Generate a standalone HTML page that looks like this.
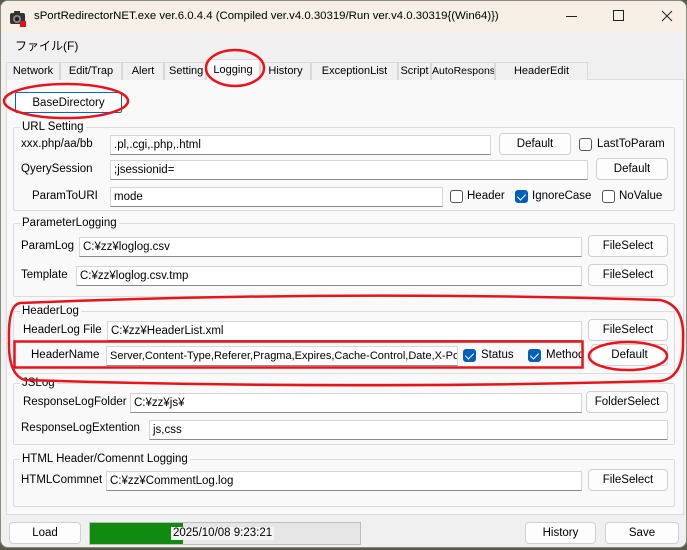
<!DOCTYPE html>
<html><head><meta charset="utf-8">
<style>
*{box-sizing:border-box;margin:0;padding:0}
body{width:687px;height:550px;overflow:hidden;background:#5a5a4a;font-family:"Liberation Sans","Noto Sans CJK JP",sans-serif;font-size:11.5px;color:#000;position:relative}
.win{position:absolute;left:0;top:0;width:687px;height:548px;background:#f0f0f0;border-radius:8px;overflow:hidden;border:1px solid #8a8a80}
.title{position:absolute;left:0;top:0;width:687px;height:32px;background:#f5efe6}
.a{position:absolute;white-space:nowrap}
.tb{position:absolute;background:#fff;border:1px solid #d6d6d6;border-bottom:1px solid #8a8a8a;height:20px;padding:2px 3px;line-height:15px;overflow:hidden;white-space:nowrap}
.btn{position:absolute;background:#fdfdfd;border:1px solid #d0d0d0;border-radius:4px;height:22px;text-align:center;line-height:20px}
.grp{position:absolute;border:1px solid #dcdcdc;border-radius:2px}
.gl{position:absolute;top:-8px;left:6px;background:#f9f9f9;padding:0 2px;line-height:14px}
.cb{position:absolute;width:13px;height:13px;border:1px solid #555;border-radius:3px;background:#fff}
.cb.on{background:#005fb8;border-color:#005fb8}
.cb.on::after{content:"";position:absolute;left:3px;top:1px;width:4px;height:7px;border:solid #fff;border-width:0 1.5px 1.5px 0;transform:rotate(45deg)}
.tab{position:absolute;top:61px;height:18px;border:1px solid #d8d8d8;border-bottom:none;background:#f0f0f0;line-height:16px;text-align:center;font-size:11px;overflow:hidden}
</style></head><body>
<div class="win">
<div class="title"></div>
<svg class="a" style="left:8px;top:8px" width="18" height="18" viewBox="0 0 18 18"><rect x="1" y="4" width="15" height="11" rx="2" fill="#333"/><rect x="5" y="2" width="6" height="3" fill="#333"/><circle cx="8" cy="10" r="4" fill="#888"/><circle cx="8" cy="10" r="2.2" fill="#222"/><rect x="11" y="12" width="6" height="6" fill="#e01020"/></svg>
<div class="a" style="left:33px;top:9px;font-size:11.4px">sPortRedirectorNET.exe ver.6.0.4.4 (Compiled ver.v4.0.30319/Run ver.v4.0.30319{(Win64)})</div>
<div class="a" style="left:565px;top:15px;width:11px;height:1px;background:#222"></div>
<div class="a" style="left:612px;top:9px;width:11px;height:11px;border:1px solid #222"></div>
<svg class="a" style="left:660px;top:9px" width="12" height="12"><path d="M1 1L11 11M11 1L1 11" stroke="#222" stroke-width="1"/></svg>
<div class="a" style="left:14px;top:36px;font-size:12px">ファイル(F)</div>
<div class="a" style="left:5px;top:78px;width:678px;height:436px;background:#f9f9f9;border:1px solid #dcdcdc"></div>
<div class="tab" style="left:5px;width:54px">Network</div>
<div class="tab" style="left:59px;width:62px">Edit/Trap</div>
<div class="tab" style="left:121px;width:42px">Alert</div>
<div class="tab" style="left:163px;width:42px;text-align:left;padding-left:4px">Setting</div>
<div class="tab" style="left:205px;top:58px;height:21px;width:54px;background:#f9f9f9;line-height:20px">Logging</div>
<div class="tab" style="left:259px;width:51px">History</div>
<div class="tab" style="left:310px;width:87px">ExceptionList</div>
<div class="tab" style="left:397px;width:33px">Script</div>
<div class="tab" style="left:430px;width:64px;font-size:10.5px">AutoResponse</div>
<div class="tab" style="left:494px;width:93px">HeaderEdit</div>
<div class="btn" style="left:14px;top:91px;width:107px;height:21px;border:1px solid #0067c0;border-radius:2px;background:#fff">BaseDirectory</div>

<div class="grp" style="left:12px;top:126px;width:662px;height:84px"><div class="gl">URL Setting</div></div>
<div class="a" style="left:20px;top:137px">xxx.php/aa/bb</div>
<div class="tb" style="left:109px;top:134px;width:381px">.pl,.cgi,.php,.html</div>
<div class="btn" style="left:498px;top:132px;width:72px">Default</div>
<div class="cb" style="left:578px;top:137px"></div><div class="a" style="left:596px;top:137px">LastToParam</div>
<div class="a" style="left:20px;top:162px">QyerySession</div>
<div class="tb" style="left:109px;top:159px;width:478px">;jsessionid=</div>
<div class="btn" style="left:595px;top:157px;width:72px">Default</div>
<div class="a" style="left:31px;top:189px">ParamToURI</div>
<div class="tb" style="left:109px;top:186px;width:333px">mode</div>
<div class="cb" style="left:449px;top:189px"></div><div class="a" style="left:466px;top:189px">Header</div>
<div class="cb on" style="left:514px;top:189px"></div><div class="a" style="left:531px;top:189px">IgnoreCase</div>
<div class="cb" style="left:601px;top:189px"></div><div class="a" style="left:618px;top:189px">NoValue</div>

<div class="grp" style="left:12px;top:222px;width:662px;height:74px"><div class="gl">ParameterLogging</div></div>
<div class="a" style="left:20px;top:239px">ParamLog</div>
<div class="tb" style="left:78px;top:236px;width:503px">C:¥zz¥loglog.csv</div>
<div class="btn" style="left:587px;top:234px;width:80px">FileSelect</div>
<div class="a" style="left:20px;top:268px">Template</div>
<div class="tb" style="left:75px;top:265px;width:506px">C:¥zz¥loglog.csv.tmp</div>
<div class="btn" style="left:587px;top:263px;width:80px">FileSelect</div>

<div class="grp" style="left:12px;top:310px;width:662px;height:63px"><div class="gl">HeaderLog</div></div>
<div class="a" style="left:22px;top:323px">HeaderLog File</div>
<div class="tb" style="left:106px;top:320px;width:475px">C:¥zz¥HeaderList.xml</div>
<div class="btn" style="left:587px;top:318px;width:80px">FileSelect</div>
<div class="a" style="left:30px;top:348px">HeaderName</div>
<div class="tb" style="left:105px;top:345px;width:352px;font-size:11px">Server,Content-Type,Referer,Pragma,Expires,Cache-Control,Date,X-Powered</div>
<div class="cb on" style="left:462px;top:348px"></div><div class="a" style="left:480px;top:348px">Status</div>
<div class="cb on" style="left:527px;top:348px"></div><div class="a" style="left:545px;top:348px">Method</div>
<div class="btn" style="left:590px;top:343px;width:77px">Default</div>

<div class="grp" style="left:12px;top:382px;width:662px;height:62px"><div class="gl">JSLog</div></div>
<div class="a" style="left:22px;top:395px">ResponseLogFolder</div>
<div class="tb" style="left:129px;top:392px;width:452px">C:¥zz¥js¥</div>
<div class="btn" style="left:585px;top:390px;width:82px">FolderSelect</div>
<div class="a" style="left:20px;top:421px">ResponseLogExtention</div>
<div class="tb" style="left:148px;top:419px;width:519px">js,css</div>

<div class="grp" style="left:12px;top:458px;width:662px;height:48px"><div class="gl">HTML Header/Comennt Logging</div></div>
<div class="a" style="left:20px;top:473px">HTMLCommnet</div>
<div class="tb" style="left:105px;top:470px;width:476px">C:¥zz¥CommentLog.log</div>
<div class="btn" style="left:587px;top:468px;width:80px">FileSelect</div>

<div class="btn" style="left:8px;top:521px;width:72px">Load</div>
<div class="a" style="left:88px;top:521px;width:272px;height:23px;background:#e6e6e6;border:1px solid #bcbcbc"></div>
<div class="a" style="left:89px;top:522px;width:93px;height:21px;background:#118a11"></div>
<div class="a" style="left:170px;top:526px;background:#f4f4f4;padding:0 2px;line-height:13px">2025/10/08 9:23:21</div>
<div class="btn" style="left:524px;top:521px;width:71px">History</div>
<div class="btn" style="left:604px;top:521px;width:74px">Save</div>
</div>
<svg class="a" style="left:0;top:0" width="687" height="550">
<g fill="none" stroke="#e8141c" stroke-width="2.5">
<ellipse cx="235" cy="68" rx="29" ry="18"/>
<ellipse cx="66" cy="101" rx="62" ry="17"/>
<path d="M20 303 Q340 290 660 300 Q685 305 683 340 Q684 378 660 381 Q340 390 25 380 Q8 375 9 340 Q8 305 20 303 Z"/>
<ellipse cx="628" cy="356" rx="39" ry="14"/>
</g>
<rect x="14.5" y="341.5" width="568" height="26" fill="none" stroke="#e8141c" stroke-width="2.5"/>
</svg>
</body></html>
